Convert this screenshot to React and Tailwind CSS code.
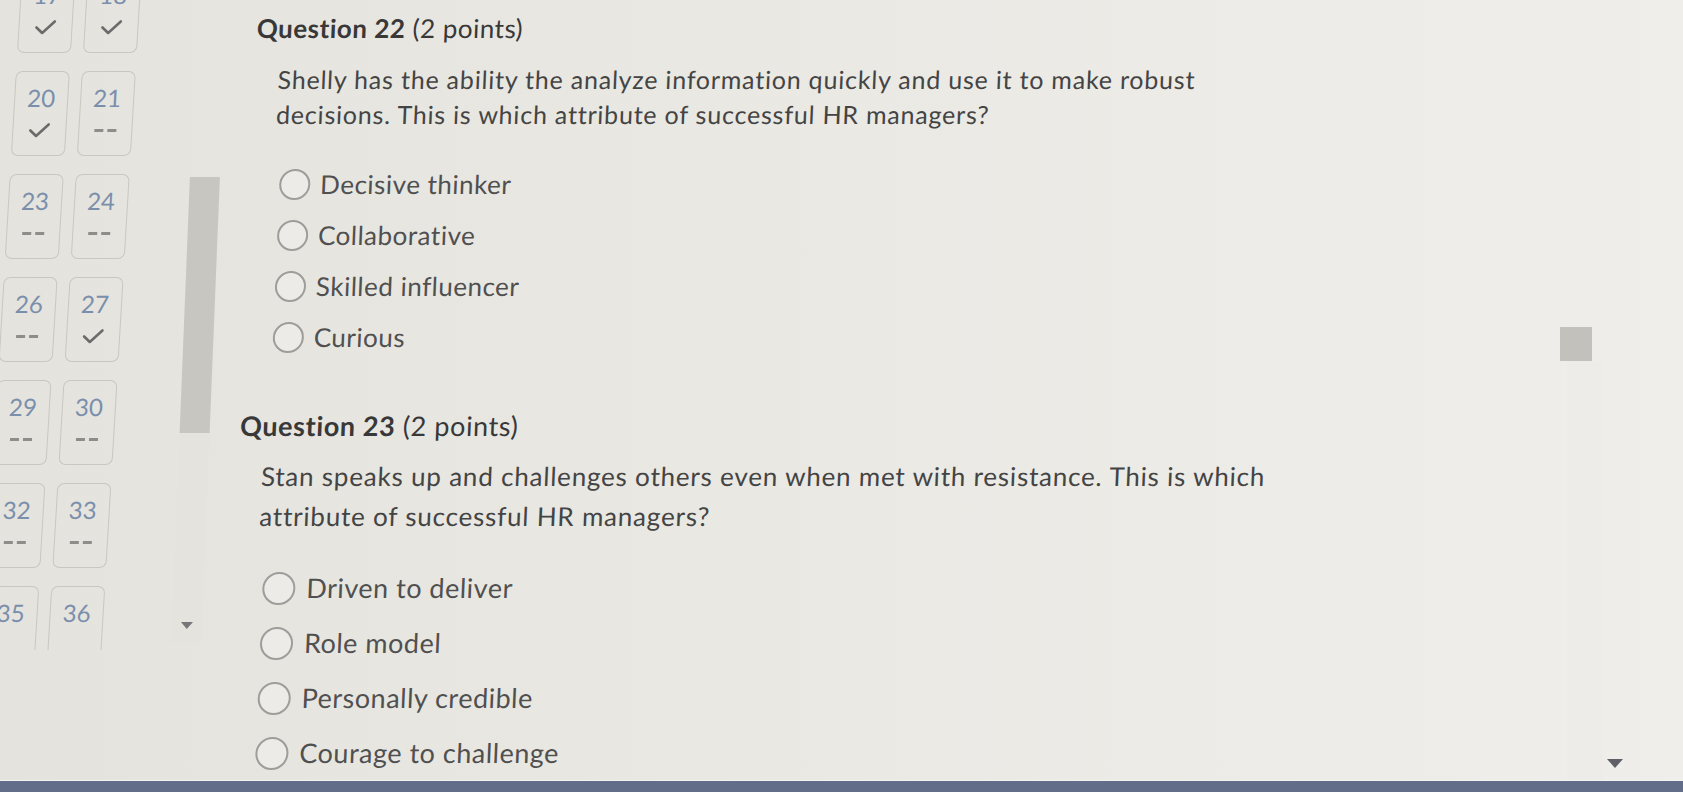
import React from 'react';

const CARDS = [
  [[17, 'check'], [18, 'check']],
  [[20, 'check'], [21, 'dash']],
  [[23, 'dash'], [24, 'dash']],
  [[26, 'dash'], [27, 'check']],
  [[29, 'dash'], [30, 'dash']],
  [[32, 'dash'], [33, 'dash']],
  [[35, null], [36, null]],
];

const QUESTIONS = [
  {
    num: 22,
    lines: ['Shelly has the ability the analyze information quickly and use it to make robust', 'decisions. This is which attribute of successful HR managers?'],
    options: ['Decisive thinker', 'Collaborative', 'Skilled influencer', 'Curious'],
  },
  {
    num: 23,
    lines: ['Stan speaks up and challenges others even when met with resistance. This is which', 'attribute of successful HR managers?'],
    options: ['Driven to deliver', 'Role model', 'Personally credible', 'Courage to challenge'],
  },
];

function Check() {
  return (<svg width="22" height="16" viewBox="0 0 22 16" fill="none">
      <path d="M2 8.5 L8 14 L20 2.5" stroke="#6b6b6b" strokeWidth="2.6" strokeLinecap="round" strokeLinejoin="round"/>
    </svg>);
}

function Dash() {
  return (<div className="flex gap-[4px]">
      <div className="w-[9px] h-[3px] bg-[#8d8d8a]"/>
      <div className="w-[9px] h-[3px] bg-[#8d8d8a]"/>
    </div>);
}

function Card({ n, mark }) {
  return (<div className="w-[54px] h-[85px] border-[1.5px] border-[#c9c7c1] rounded-[7px] flex flex-col items-center pt-[11px]">
      <span className="text-[24px] leading-[29px] text-[#7a8fab]">{n}</span>
      <div className="h-[26px] mt-[5px] flex items-center">
        {mark === 'check' && <Check />}
        {mark === 'dash' && <Dash />}
      </div>
    </div>);
}

function Radio({ size }) {
  return (<div className={`shrink-0 rounded-full border-[2px] border-[#9e9d99] bg-[#ecebe7] ${size}`}/>);
}

function Question({ q, big }) {
  return (<section>
      <h2 className={`text-[#383838] leading-[34px] ${big ? 'text-[27px] tracking-[0.6px]' : 'text-[26px] tracking-[0.5px]'}`}>
        <span className="font-bold">Question {q.num}</span> <span>(2 points)</span>
      </h2>
      <p className={`ml-[23px] text-[#444] ${big ? 'mt-[13px] text-[26px] leading-[40px] tracking-[0.8px]' : 'mt-[17px] text-[25px] leading-[35px] tracking-[0.8px]'}`}>
        {q.lines[0]}<br />{q.lines[1]}
      </p>
      <div className={`ml-[29px] flex flex-col ${big ? 'mt-[25px]' : 'mt-[27px]'}`}>
        {q.options.map(o => (<label key={o} className={`flex items-center ${big ? 'h-[55px] gap-[11px]' : 'h-[51px] gap-[10px]'}`}>
            <Radio size={big ? 'w-[33px] h-[33px]' : 'w-[31px] h-[31px]'}/>
            <span className={`text-[#505050] tracking-[0.5px] ${big ? 'text-[27px]' : 'text-[26px]'}`}>{o}</span>
          </label>))}
      </div>
    </section>);
}

export default function App() {
  return (<div className="w-[1683px] h-[792px] overflow-hidden flex flex-col bg-gradient-to-r from-[#e5e3de] via-[#eae9e4] to-[#efeeea] font-['Lato','Liberation_Sans',sans-serif]">
      <div className="h-[780px] flex">
        {/* quiz navigation */}
        <aside className="w-[170px] h-[650px] overflow-hidden shrink-0">
          <div className="origin-top-left -skew-x-[3.4deg] ml-[22px] -mt-[32px] grid grid-cols-[54px_54px] gap-x-[12px] gap-y-[18px]">
            {CARDS.flat().map(([n, mark]) => <Card key={n} n={n} mark={mark}/>)}
          </div>
        </aside>

        <div className="w-[50px] shrink-0 pt-[177px] origin-top-left -skew-x-[2.3deg]">
          <div className="ml-[27px] w-[30px] h-[256px] bg-[#c8c6c0]"/>
          <div className="ml-[27px] w-[30px] h-[210px] bg-[#e4e3de] flex items-end justify-center pb-[14px]">
            <div className="w-0 h-0 border-l-[6px] border-r-[6px] border-t-[7px] border-l-transparent border-r-transparent border-t-[#77777a]"/>
          </div>
        </div>

        <main className="flex-1 pl-[38px] pt-[11px] origin-top-left -skew-x-[2.4deg]">
          <Question q={QUESTIONS[0]}/>
          <div className="h-[46px]"/>
          <Question q={QUESTIONS[1]} big/>
        </main>

        <div className="w-[128px] shrink-0 pt-[327px] flex flex-col">
          <div className="ml-[5px] w-[32px] h-[34px] bg-[#c3c1bc]"/>
          <div className="ml-[12px] w-[36px] flex-1 bg-[#edece8] flex items-end justify-end pb-[12px]">
            <div className="translate-x-[20px] w-0 h-0 border-l-[8px] border-r-[8px] border-t-[9px] border-l-transparent border-r-transparent border-t-[#5f5f67]"/>
          </div>
        </div>
      </div>
      <div className="h-[1px] bg-[#f4f3f0]"/>
      <div className="flex-1 bg-[#626d89]"/>
    </div>);
}
